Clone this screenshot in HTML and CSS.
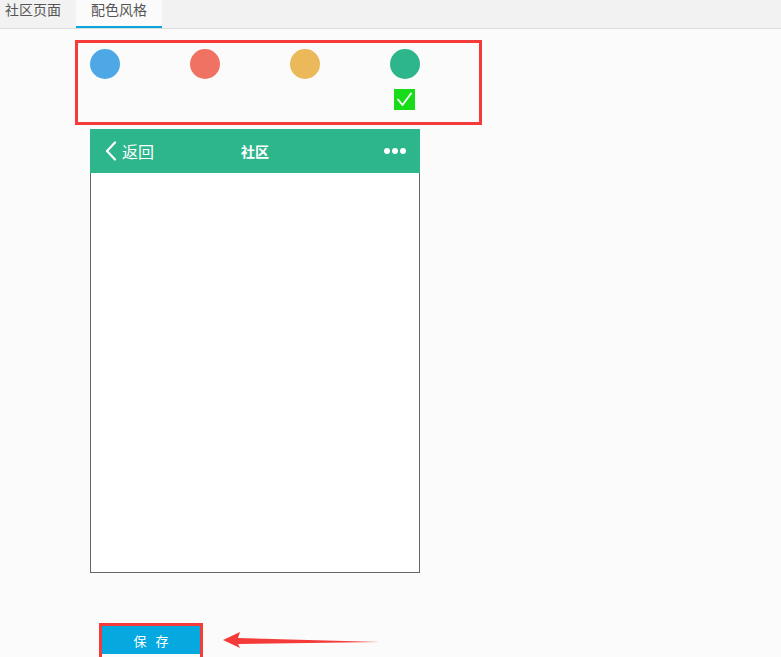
FILE: index.html
```html
<!DOCTYPE html>
<html lang="zh">
<head>
<meta charset="utf-8">
<title>配色风格</title>
<link rel="stylesheet" href="styles.css">
</head>
<body>
<div class="tabs">
  <div class="tab first">社区页面</div>
  <div class="tab active">配色风格</div>
</div>
<div class="content">
  <div class="palette">
    <div class="swatch"><span class="dot blue"></span></div>
    <div class="swatch"><span class="dot red"></span></div>
    <div class="swatch"><span class="dot yellow"></span></div>
    <div class="swatch"><span class="dot green"></span>
      <span class="check"><svg width="21" height="21" viewBox="0 0 21 21"><path d="M4 10.5 L8.5 16 L17 4.5" fill="none" stroke="#fff" stroke-width="1.8" stroke-linecap="round" stroke-linejoin="round"/></svg></span>
    </div>
  </div>
  <div class="phone">
    <div class="phone-head">
      <div class="back"><svg width="12" height="20" viewBox="0 0 12 20"><path d="M10 1.5 L2 10 L10 18.5" fill="none" stroke="#fff" stroke-width="2.2" stroke-linecap="round" stroke-linejoin="round"/></svg><span>返回</span></div>
      <div class="title">社区</div>
      <div class="more"><i></i><i></i><i></i></div>
    </div>
    <div class="phone-body"></div>
  </div>
  <div class="save-row">
    <div class="save-frame"><button class="save">保 存</button></div>
    <svg class="arrow" width="160" height="20" viewBox="0 0 160 20"><polygon points="0,8 17,0 15,6 157,10 15,12 17,16" fill="#f53a3a"/></svg>
  </div>
</div>
</body>
</html>
```
FILE: styles.css
```css
html, body {
  margin: 0;
  padding: 0;
  background: #fbfbfb;
  font-family: "Noto Sans CJK SC", "Liberation Sans", sans-serif;
  overflow: hidden;
}
.tabs {
  display: flex;
  height: 28px;
  background: #f2f2f2;
  border-bottom: 1px solid #dcdcdc;
}
.tab {
  padding: 0 15px;
  font-size: 14px;
  line-height: 19px;
  color: #555;
  box-sizing: border-box;
  height: 28px;
}
.tab.first {
  padding-left: 5px;
}
.tab.active {
  background: #fbfbfb;
  border-bottom: 2px solid #0aa5dc;
}
.content {
  padding-left: 75px;
}
.palette {
  margin-top: 11px;
  width: 407px;
  height: 85px;
  box-sizing: border-box;
  border: 3px solid #f53a3a;
  display: flex;
  gap: 70px;
  padding: 6px 0 0 12px;
}
.swatch {
  width: 30px;
  display: flex;
  flex-direction: column;
  align-items: center;
  gap: 10px;
}
.dot {
  width: 30px;
  height: 30px;
  border-radius: 50%;
  display: block;
}
.blue { background: #4ea8e6; }
.red { background: #f07262; }
.yellow { background: #ebb85a; }
.green { background: #2db58b; }
.check {
  width: 21px;
  height: 21px;
  background: #18dc18;
  display: block;
  margin-right: 1px;
}
.check svg { display: block; }
.phone {
  margin: 4px 0 0 15px;
  width: 330px;
}
.phone-head {
  height: 44px;
  background: #2db58b;
  display: flex;
  align-items: center;
  justify-content: space-between;
  padding: 0 14px 0 15px;
  color: #fff;
  position: relative;
}
.back {
  display: flex;
  align-items: center;
  gap: 5px;
  font-size: 16px;
  margin-top: 0;
}
.back svg { display: block; }
.title {
  position: absolute;
  left: 0;
  right: 0;
  text-align: center;
  font-size: 14px;
  font-weight: bold;
  pointer-events: none;
}
.more {
  display: flex;
  gap: 2px;
}
.more i {
  width: 6px;
  height: 6px;
  border-radius: 50%;
  background: #fff;
  display: block;
}
.phone-body {
  height: 399px;
  background: #fff;
  border: 1px solid #666;
  border-top: none;
}
.save-row {
  margin: 50px 0 0 24px;
  display: flex;
  align-items: flex-start;
  gap: 20px;
}
.save-frame {
  width: 104px;
  height: 60px;
  box-sizing: border-box;
  border: 3px solid #f53a3a;
  border-bottom: none;
  background: #fbfbfb;
}
.save {
  display: block;
  width: 98px;
  height: 28px;
  border: none;
  background: #06a8e0;
  color: #fff;
  font-family: inherit;
  font-size: 13px;
  letter-spacing: 3px;
  padding: 0 0 0 3px;
}
.arrow {
  margin-top: 9px;
}
```
